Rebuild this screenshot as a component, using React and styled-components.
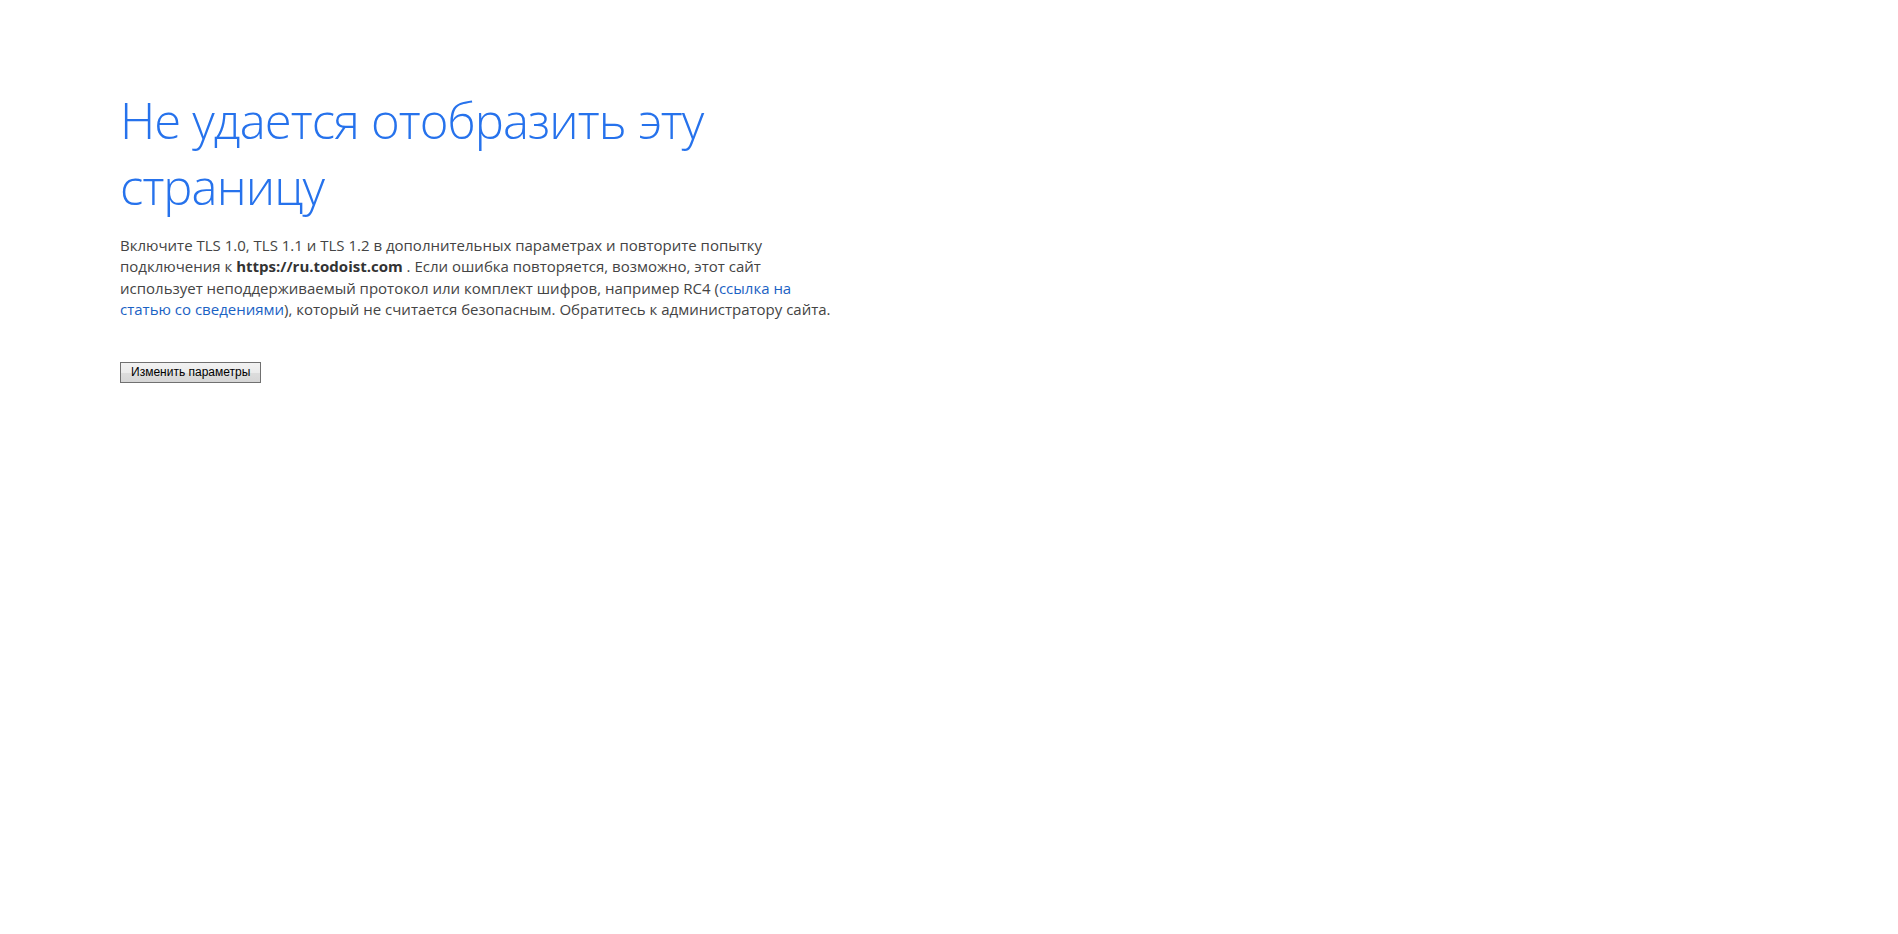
import React from "react";
import styled, { createGlobalStyle } from "styled-components";

const GlobalStyle = createGlobalStyle`
  html, body {
    margin: 0;
    padding: 0;
    background: #ffffff;
  }
  body {
    font-family: "Open Sans", "Noto Sans", "Liberation Sans", sans-serif;
  }
`;

const Page = styled.main`
  min-height: 934px;
  box-sizing: border-box;
  padding: 87px 0 0 120px;
  display: flex;
  flex-direction: column;
  align-items: flex-start;
`;

const Title = styled.h1`
  margin: 0;
  font-family: "Open Sans", "Noto Sans", sans-serif;
  font-weight: 300;
  font-size: 49px;
  letter-spacing: -0.9px;
  line-height: 66px;
  color: #2672ec;
  white-space: nowrap;
`;

const Message = styled.p`
  margin: 16px 0 0 0;
  font-family: "Open Sans", "Noto Sans", sans-serif;
  font-size: 15px;
  line-height: 21.3px;
  color: #444444;
  white-space: nowrap;
`;

const Host = styled.strong`
  font-weight: 700;
  color: #333333;
`;

const InfoLink = styled.a`
  color: #1a62c4;
  text-decoration: none;
`;

const Actions = styled.div`
  margin-top: 42px;
  display: flex;
`;

const SettingsButton = styled.button`
  box-sizing: border-box;
  height: 21px;
  padding: 0 10px;
  border: 1px solid #707070;
  border-radius: 0;
  background: linear-gradient(to bottom, #f2f2f2 0%, #ebebeb 50%, #dddddd 51%, #d6d6d6 100%);
  font-family: "Liberation Sans", Arial, sans-serif;
  font-size: 12px;
  color: #000000;
  line-height: 19px;
  cursor: default;
`;

export default function App() {
  return (
    <>
      <GlobalStyle />
      <Page>
        <Title>
          Не удается отобразить эту
          <br />
          страницу
        </Title>
        <Message>
          Включите TLS 1.0, TLS 1.1 и TLS 1.2 в дополнительных параметрах и повторите попытку
          <br />
          подключения к <Host>https://ru.todoist.com</Host> . Если ошибка повторяется, возможно, этот сайт
          <br />
          использует неподдерживаемый протокол или комплект шифров, например RC4 (
          <InfoLink href="#">
            ссылка на
            <br />
            статью со сведениями
          </InfoLink>
          ), который не считается безопасным. Обратитесь к администратору сайта.
        </Message>
        <Actions>
          <SettingsButton type="button">Изменить параметры</SettingsButton>
        </Actions>
      </Page>
    </>
  );
}
